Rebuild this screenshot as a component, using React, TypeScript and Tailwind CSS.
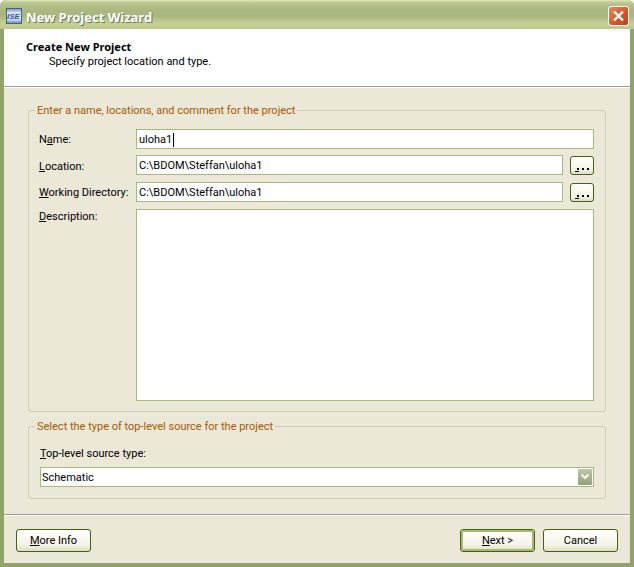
const inputCls = 'flex h-5 items-center border border-[#a5b97f] bg-white pl-[2px] pt-[1px] text-[11px] leading-[14px] text-black';

function XpButton({ children, isDefault = false }: { children: React.ReactNode; isDefault?: boolean }) {
  return (
    <button className="h-[23px] w-[75px] rounded-[3px] border border-[#47620f] bg-[linear-gradient(#ffffff,#f6f4e6_70%,#e2dcc8)] text-[11px] text-black">
      <span className={isDefault ? 'flex h-full w-full items-center justify-center rounded-[2px] border-2 border-[#a3bb6e] pt-[1px]' : 'flex h-full w-full items-center justify-center pt-[2px]'}>
        {children}
      </span>
    </button>
  );
}

function BrowseButton() {
  return (
    <button className="mt-[1px] flex h-[19px] w-6 items-end justify-center gap-[3px] rounded-[3px] border border-[#47620f] bg-[linear-gradient(#ffffff,#f6f4e6_70%,#e2dcc8)] pb-[2px]">
      <span className="flex flex-col items-end gap-[1px]">
        <span className="h-[2px] w-[2px] bg-black" />
        <span className="h-[1px] w-[4px] bg-black" />
      </span>
      <span className="mb-[2px] h-[2px] w-[2px] bg-black" />
      <span className="mb-[2px] h-[2px] w-[2px] bg-black" />
    </button>
  );
}

function Row({ label, pad = 'pt-[1px]', children }: { label: React.ReactNode; pad?: string; children: React.ReactNode }) {
  return (
    <div className="flex h-5 items-center">
      <div className={`ml-[-1px] w-[97px] shrink-0 whitespace-nowrap text-[11px] leading-[14px] text-black ${pad}`}>{label}</div>
      {children}
    </div>
  );
}

export default function App() {
  return (
    <div className="flex h-[567px] w-[634px] flex-col overflow-hidden rounded-t-[6px] bg-[#8fa36a] font-['Roboto',sans-serif] text-[11px]">
      {/* Title bar */}
      <div className="flex h-[29px] shrink-0 items-center justify-between bg-[linear-gradient(#dfe7b8_0px,#b9c68f_3px,#a9b880_10px,#a9b880_16px,#c6d094_24px,#bcc88c_29px)] pl-[6px] pr-[5px] pt-[3px]">
        <div className="flex items-center gap-[4px]">
          <svg width="16" height="16" viewBox="0 0 16 16">
            <defs>
              <linearGradient id="ise" x1="0" y1="0" x2="0" y2="1">
                <stop offset="0" stopColor="#6f8fc0" />
                <stop offset="0.3" stopColor="#dfe8f4" />
                <stop offset="0.7" stopColor="#dfe8f4" />
                <stop offset="1" stopColor="#5f80b4" />
              </linearGradient>
            </defs>
            <rect x="0.5" y="0.5" width="15" height="15" fill="url(#ise)" stroke="#46608c" />
            <text x="1" y="11" fontSize="8" fontWeight="700" fontStyle="italic" fill="#2450b0" fontFamily="Liberation Sans, sans-serif">ISE</text>
          </svg>
          <span className="pt-[1px] font-['Noto_Sans',sans-serif] text-[13px] font-bold leading-[16px] text-white [text-shadow:1px_1px_0_#6f7d52]">New Project Wizard</span>
        </div>
        <div className="flex h-[20px] w-[21px] items-center justify-center rounded-[3px] border border-white bg-[linear-gradient(135deg,#ea8a5e,#d9572a_55%,#b8411d)]">
          <svg width="15" height="14" viewBox="0 0 15 14">
            <path d="M3 2.5 L12 11.5 M12 2.5 L3 11.5" stroke="#fff" strokeWidth="2.4" />
          </svg>
        </div>
      </div>

      {/* Window client */}
      <div className="mx-[4px] mb-[4px] flex min-h-0 flex-1 flex-col bg-[#ebe8d8]">
        <div className="h-[57px] shrink-0 bg-white pl-[22px] pt-[11px]">
          <div className="font-['Noto_Sans',sans-serif] font-bold leading-[14px] text-black">Create New Project</div>
          <div className="pl-[23px] pt-[1px] leading-[14px] text-black">Specify project location and type.</div>
        </div>
        <div className="h-[2px] shrink-0 border-t border-[#9d9d92] bg-white" />

        <div className="flex min-h-0 flex-1 flex-col px-[24px] pt-[14px]">
          <fieldset className="h-[310px] shrink-0 rounded-[3px] border border-[#cfcdb9] px-[11px]">
            <legend className="ml-[-5px] px-[2px] pt-[2px] leading-[14px] text-[#a85a00]">Enter a name, locations, and comment for the project</legend>
            <div className="flex flex-col gap-[7px] pt-[11px]">
              <div className="mb-[-1px]">
                <Row label={<>N<u>a</u>me:</>}>
                  <div className={`${inputCls} w-[458px]`}>uloha1<span className="ml-[1px] h-[14px] w-[1px] bg-black" /></div>
                </Row>
              </div>
              <Row pad="pt-[3px]" label={<><u>L</u>ocation:</>}>
                <div className={`${inputCls} w-[427px]`}>C:\BDOM\Steffan\uloha1</div>
                <div className="ml-[7px] flex"><BrowseButton /></div>
              </Row>
              <Row label={<><u>W</u>orking Directory:</>}>
                <div className={`${inputCls} w-[427px]`}>C:\BDOM\Steffan\uloha1</div>
                <div className="ml-[7px] flex"><BrowseButton /></div>
              </Row>
              <div className="flex items-start">
                <div className="ml-[-1px] w-[97px] shrink-0 pt-[1px] leading-[14px] text-black"><u>D</u>escription:</div>
                <div className="h-[192px] w-[458px] border border-[#a5b97f] bg-white" />
              </div>
            </div>
          </fieldset>

          <fieldset className="mt-[6px] h-[81px] shrink-0 rounded-[3px] border border-[#cfcdb9] px-[11px]">
            <legend className="ml-[-5px] px-[2px] pt-[2px] leading-[14px] text-[#a85a00]">Select the type of top-level source for the project</legend>
            <div className="pt-[13px] leading-[14px] text-black"><u>T</u>op-level source type:</div>
            <div className="mt-[6px] flex h-5 w-[554px] items-center justify-between border border-[#a5b97f] bg-white pl-[1px] pr-[1px] text-black">
              <span className="pt-[2px]">Schematic</span>
              <div className="flex h-4 w-[14px] items-center justify-center rounded-[1px] bg-[linear-gradient(#c0c9a6,#8fa076)]">
                <svg width="10" height="8" viewBox="0 0 10 8">
                  <path d="M1.5 1.5 L5 5 L8.5 1.5" fill="none" stroke="#fff" strokeWidth="2" />
                </svg>
              </div>
            </div>
          </fieldset>
        </div>

        <div className="h-[2px] shrink-0 border-t border-[#9d9d92] bg-white" />
        <div className="flex h-[47px] shrink-0 items-start justify-between px-[12px] pt-[13px]">
          <XpButton><span><u>M</u>ore Info</span></XpButton>
          <div className="flex gap-[8px]">
            <XpButton isDefault><span><u>N</u>ext &gt;</span></XpButton>
            <XpButton>Cancel</XpButton>
          </div>
        </div>
      </div>
    </div>
  );
}
